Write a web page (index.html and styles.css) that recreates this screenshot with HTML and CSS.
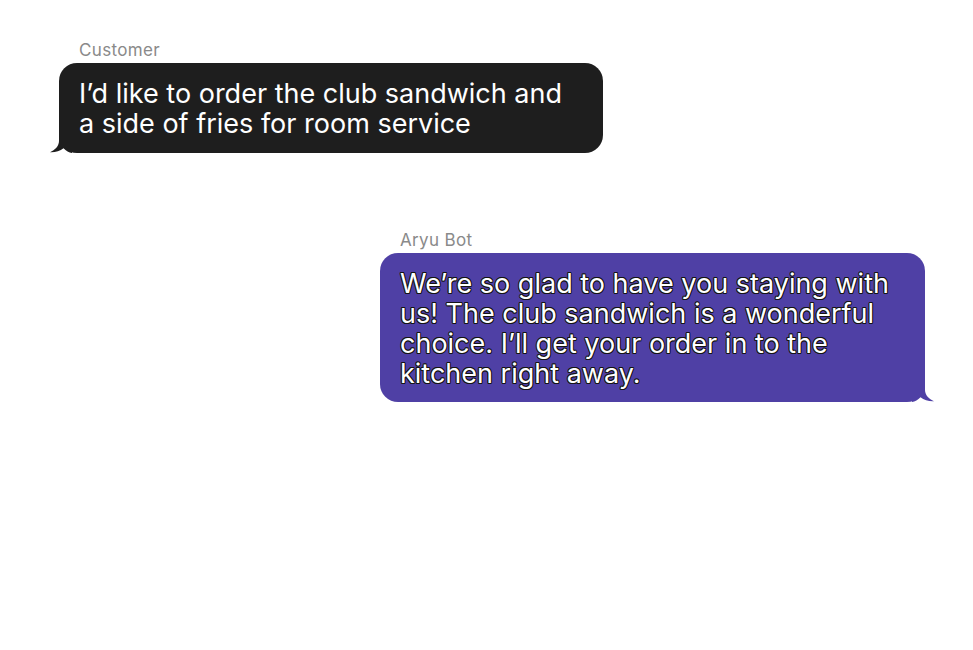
FILE: index.html
```html
<!DOCTYPE html>
<html>
<head>
<meta charset="utf-8">
<link rel="stylesheet" href="styles.css">
</head>
<body>
<div class="chat">
  <div class="msg msg-in">
    <div class="label">Customer</div>
    <div class="bubble bubble-dark">
      I’d like to order the club sandwich and<br>a side of fries for room service
      <svg class="tail tail-left" width="24" height="20" viewBox="0 0 24 20"><path d="M11 0 L11 8 C11 13 7 17 2 19.3 C7 19.6 12 18 15.5 15.3 C18 17.5 21 20 24 20 L24 0 Z" fill="#1e1e1e"/></svg>
    </div>
  </div>
  <div class="msg msg-out">
    <div class="label">Aryu Bot</div>
    <div class="bubble bubble-purple">
      We’re so glad to have you staying with<br>us! The club sandwich is a wonderful<br>choice. I’ll get your order in to the<br>kitchen right away.
      <svg class="tail tail-right" width="24" height="20" viewBox="0 0 24 20"><path d="M13 0 L13 8 C13 13 17 17 22 19.3 C17 19.6 12 18 8.5 15.3 C6 17.5 3 20 0 20 L0 0 Z" fill="#4f40a5"/></svg>
    </div>
  </div>
</div>
</body>
</html>
```
FILE: styles.css
```css
html, body {
  margin: 0;
  padding: 0;
  background: #ffffff;
}
body {
  font-family: Inter, "Noto Sans", sans-serif;
}
.chat {
  display: flex;
  flex-direction: column;
  padding: 40px 0 0 59px;
  width: 866px;
}
.msg {
  display: flex;
  flex-direction: column;
}
.msg-out {
  margin-top: 77px;
  margin-left: 321px;
}
.label {
  font-size: 17px;
  line-height: 20px;
  height: 23px;
  color: #8a8a8a;
  padding-left: 20px;
  letter-spacing: 0.35px;
}
.bubble {
  position: relative;
  border-radius: 18px;
  padding: 16px 20px 14px;
  font-size: 27px;
  line-height: 30px;
  color: #ffffff;
}
.bubble-dark {
  background: #1e1e1e;
  width: 504px;
}
.bubble-purple {
  background: #4f40a5;
  width: 505px;
  padding: 16px 20px 13px;
  text-shadow: 1px 0 0 #141414, -1px 0 0 #141414, 0 1px 0 #141414, 0 -1px 0 #141414,
    0.7px 0.7px 0 #141414, -0.7px 0.7px 0 #141414, 0.7px -0.7px 0 #141414, -0.7px -0.7px 0 #141414;
}
.tail {
  position: absolute;
  bottom: 0;
}
.tail-left {
  left: -11px;
}
.tail-right {
  right: -11px;
}
```
